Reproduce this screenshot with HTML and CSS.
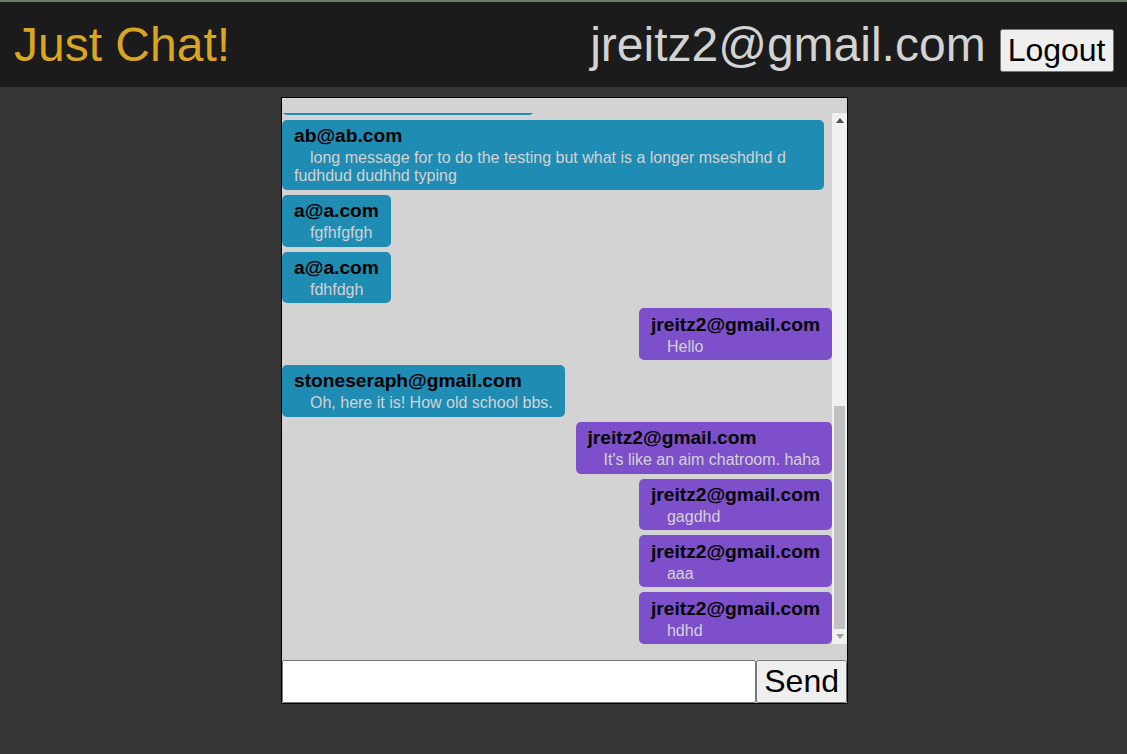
FILE: index.html
```html
<!DOCTYPE html>
<html>
<head>
<meta charset="utf-8">
<title>Just Chat!</title>
<link rel="stylesheet" href="styles.css">
</head>
<body>
<header class="topbar">
  <h1 class="brand">Just Chat!</h1>
  <div class="account">
    <span class="user">jreitz2@gmail.com</span>
    <button class="logout">Logout</button>
  </div>
</header>
<main class="chat">
  <div class="scroller">
    <div class="viewport">
      <div class="messages">
        <div class="msg other"><div class="name">a@a.com</div><div class="text">hi</div></div>
        <div class="msg mine"><div class="name">jreitz2@gmail.com</div><div class="text">hello there</div></div>
        <div class="msg other"><div class="name">ab@ab.com</div><div class="text">test</div></div>
        <div class="msg other"><div class="name">a@a.com</div><div class="text">another test</div></div>
        <div class="msg mine"><div class="name">jreitz2@gmail.com</div><div class="text">works</div></div>
        <div class="msg other"><div class="name">ab@ab.com</div><div class="text">yes</div></div>
        <div class="msg other"><div class="name">a@a.com</div><div class="text">asdf</div></div>
        <div class="msg mine"><div class="name">jreitz2@gmail.com</div><div class="text">ok</div></div>
        <div class="msg other"><div class="name">ab@ab.com</div><div class="text">qwerty</div></div>
        <div class="msg other"><div class="name">a@a.com</div><div class="text">sdfg</div></div>
        <div class="msg mine"><div class="name">jreitz2@gmail.com</div><div class="text">test</div></div>
        <div class="msg other"><div class="name">stoneseraph@gmail.com</div><div class="text">Is this thing on?</div></div>
        <div class="msg other"><div class="name">ab@ab.com</div><div class="text">long message for to do the testing but what is a longer mseshdhd d fudhdud dudhhd typing</div></div>
        <div class="msg other"><div class="name">a@a.com</div><div class="text">fgfhfgfgh</div></div>
        <div class="msg other"><div class="name">a@a.com</div><div class="text">fdhfdgh</div></div>
        <div class="msg mine"><div class="name">jreitz2@gmail.com</div><div class="text">Hello</div></div>
        <div class="msg other"><div class="name">stoneseraph@gmail.com</div><div class="text">Oh, here it is! How old school bbs.</div></div>
        <div class="msg mine"><div class="name">jreitz2@gmail.com</div><div class="text">It's like an aim chatroom. haha</div></div>
        <div class="msg mine"><div class="name">jreitz2@gmail.com</div><div class="text">gagdhd</div></div>
        <div class="msg mine"><div class="name">jreitz2@gmail.com</div><div class="text">aaa</div></div>
        <div class="msg mine"><div class="name">jreitz2@gmail.com</div><div class="text">hdhd</div></div>
      </div>
    </div>
    <div class="scrollbar">
      <div class="sb-btn">
        <svg width="8" height="5" viewBox="0 0 8 5"><path d="M4 0 L8 5 L0 5 Z" fill="#505050"/></svg>
      </div>
      <div class="sb-track">
        <div class="sb-thumb"></div>
      </div>
      <div class="sb-btn">
        <svg width="8" height="5" viewBox="0 0 8 5"><path d="M0 0 L8 0 L4 5 Z" fill="#a3a3a3"/></svg>
      </div>
    </div>
  </div>
  <form class="composer">
    <input class="entry" type="text">
    <button class="send" type="button">Send</button>
  </form>
</main>
</body>
</html>
```
FILE: styles.css
```css
html, body {
  margin: 0;
  padding: 0;
}
body {
  background: #353535;
  font-family: "Liberation Sans", Arial, sans-serif;
  height: 754px;
}
.topbar {
  box-sizing: border-box;
  height: 87px;
  border-top: 2px solid #667f66;
  background: #1b1b1b;
  display: flex;
  align-items: center;
  justify-content: space-between;
  padding: 0 13.5px 0 14px;
}
.brand {
  margin: 0;
  font-size: 48px;
  font-weight: normal;
  color: #daa520;
}
.account {
  display: flex;
  align-items: baseline;
  gap: 14px;
}
.user {
  font-size: 48px;
  color: #d3d3d3;
}
.logout, .send {
  font-family: "Liberation Sans", Arial, sans-serif;
  font-size: 32px;
}
.chat {
  box-sizing: border-box;
  width: 567px;
  height: 607px;
  margin: 10px 0 0 calc(50% - 282.5px);
  border: 1px solid #000;
  background: #d3d3d3;
  padding-top: 15px;
  display: flex;
  flex-direction: column;
}
.scroller {
  height: 531px;
  display: flex;
}
.viewport {
  flex: 1;
  min-width: 0;
  overflow: hidden;
  display: flex;
  flex-direction: column-reverse;
}
.messages {
  display: flex;
  flex-direction: column;
  align-items: flex-start;
}
.scrollbar {
  width: 15px;
  background: #f1f1f1;
  display: flex;
  flex-direction: column;
}
.sb-btn {
  height: 15px;
  display: flex;
  align-items: center;
  justify-content: center;
}
.sb-track {
  flex: 1;
  display: flex;
  flex-direction: column;
  justify-content: flex-end;
}
.sb-thumb {
  height: 223px;
  margin: 0 2px;
  background: #c1c1c1;
}
.msg {
  box-sizing: border-box;
  max-width: 542px;
  margin-top: 5px;
  padding: 5.4px 12px 4.4px;
  border-radius: 5px;
}
.msg.other {
  background: #1f8cb4;
}
.msg.mine {
  background: #7e4fcb;
  align-self: flex-end;
}
.name {
  font-size: 19.2px;
  font-weight: bold;
  color: #000;
}
.text {
  padding-top: 2px;
  font-size: 16px;
  color: #d3d3d3;
  text-indent: 16px;
}
.composer {
  margin: 16px 0 0;
  display: flex;
}
.entry {
  flex: 1;
  min-width: 0;
  margin: 0;
  font-size: 16px;
  font-family: "Liberation Sans", Arial, sans-serif;
}
.send {
  margin: 0;
}
```
